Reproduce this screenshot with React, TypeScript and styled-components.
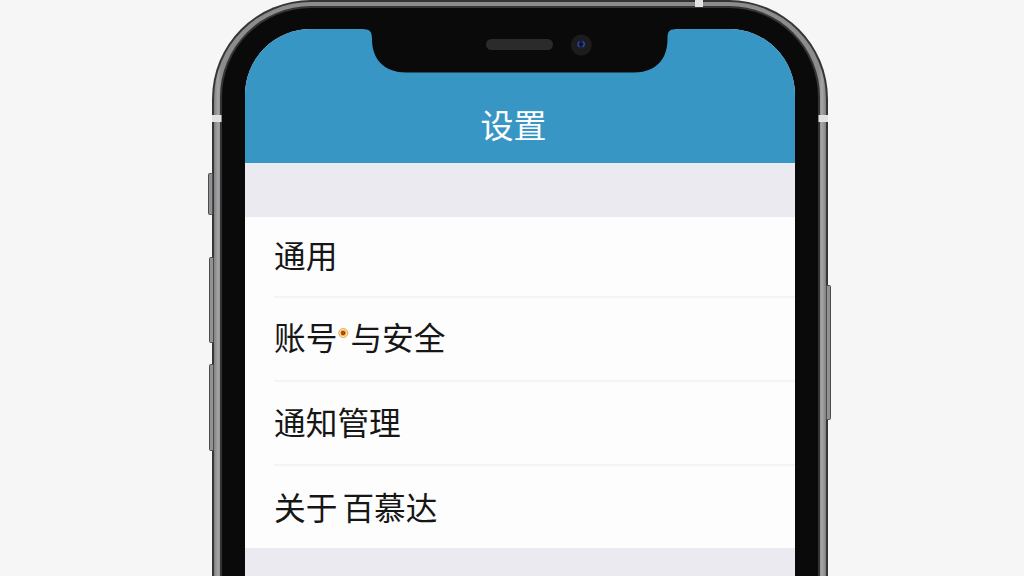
import React from 'react'
import styled, { createGlobalStyle } from 'styled-components'

const GlobalStyle = createGlobalStyle`
  * { box-sizing: border-box; }
  body {
    margin: 0;
    background: #f6f6f6;
    font-family: "Noto Sans CJK SC", "Noto Sans", sans-serif;
  }
`

const Stage = styled.div`
  position: relative;
  display: flex;
  align-items: flex-start;
  justify-content: center;
  width: 1024px;
  height: 576px;
  padding-left: 16px;
  overflow: hidden;
  background: #f6f6f6;
`

const Phone = styled.div`
  flex: none;
  width: 616px;
  height: 700px;
  padding: 2px 2px 0;
  border-radius: 99px 99px 0 0;
  background: #353537;
`

const Rim = styled.div`
  height: 100%;
  padding: 4px 6px 0;
  border-radius: 97px 97px 0 0;
  background: linear-gradient(90deg, #808082 0, #a6a6a6 4px, #8c8c8e 7px, #8c8c8e 605px, #a6a6a6 608px, #808082 612px);
`

const Bezel = styled.div`
  height: 100%;
  padding: 21px 23px 0;
  border: solid #353536;
  border-width: 2px 2px 0;
  border-radius: 91px 91px 0 0;
  background: #0a0a0a;
`

const Screen = styled.main`
  display: flex;
  flex-direction: column;
  gap: 54px;
  height: 100%;
  overflow: hidden;
  border-radius: 66px 66px 0 0;
  background: #ebeaf0;
`

const Hardware = styled.svg`
  position: absolute;
  inset: 0;
  pointer-events: none;
`

const Header = styled.header`
  display: flex;
  flex: none;
  align-items: flex-end;
  justify-content: center;
  height: 134px;
  padding: 0 13px 15px 0;
  background: #3896c4;
`

const Title = styled.h1`
  margin: 0;
  color: #fff;
  font-size: 33px;
  font-weight: 400;
  line-height: 48px;
`

const List = styled.ul`
  margin: 0;
  padding: 0 0 0 29px;
  list-style: none;
  background: #fdfdfd;
`

const Row = styled.li<{ $height: number; $lift?: number }>`
  display: flex;
  align-items: center;
  height: ${({ $height }) => $height}px;
  padding-bottom: ${({ $lift = 5 }) => $lift}px;
  border-bottom: 2px solid #f4f4f4;
  color: #161616;
  font-size: 31.7px;
  line-height: 46px;
  white-space: pre;

  &:last-child {
    border-bottom: 0;
  }
`

const Gap = styled.span`
  width: 5px;
`

const Badge = styled.svg`
  flex: none;
  margin: 0 1px 6px 0;
`

const BUTTONS = [
  { x: 208, y: 173, height: 42 },
  { x: 209, y: 257, height: 86 },
  { x: 209, y: 364, height: 87 },
  { x: 826, y: 285, height: 135 },
]

const PhoneHardware = () => (
  <Hardware width="1024" height="576" viewBox="0 0 1024 576">
    {BUTTONS.map(({ x, y, height }) => (
      <rect key={y} x={x + 0.5} y={y + 0.5} width="4" height={height - 1} rx="1" fill="#929294" stroke="#4c4c4e" />
    ))}

    {/* antenna bands */}
    <g fill="#e2e2e3">
      <rect x="212" y="115" width="9.5" height="7" />
      <rect x="818.5" y="115" width="9.5" height="7" />
      <rect x="695" y="0" width="8" height="7" />
    </g>

    {/* notch, speaker and camera */}
    <path d="M364 26V29.3C370 29.3 372 32 372 39C372 59 384 72.5 406 72.5H634C656 72.5 667.5 59 667.5 39C667.5 32 669 29.3 675 29.3V26Z" fill="#0a0a0a" />
    <rect x="486" y="39" width="67" height="11" rx="5.5" fill="#2b2b2c" />
    <circle cx="581.3" cy="45" r="10.5" fill="#1c1c1d" />
    <circle cx="581.3" cy="44.3" r="4.6" fill="#17203f" />
    <path d="M579.3 41.8Q576.5 44 579.5 47M583 41.5Q586 44.5 582.5 47" fill="none" stroke="#344c98" strokeWidth="1.3" />
    <circle cx="580.7" cy="44.3" r="1.5" fill="#0b1029" />
  </Hardware>
)

const HotDot = () => (
  <Badge width="12" height="12" viewBox="0 0 12 12">
    <circle cx="6.3" cy="6" r="4.5" fill="#fdebc0" stroke="#dda653" />
    <circle cx="6.3" cy="6" r="3" fill="#f0a32c" />
    <path d="M4.4 4.3H7L8.4 6L7 7.7H4.4Z" fill="#8c2414" />
    <path d="M6.1 5.2V6.7" stroke="#f4b13f" strokeWidth="0.8" />
  </Badge>
)

const App = () => (
  <>
    <GlobalStyle />
    <Stage>
      <Phone>
        <Rim>
          <Bezel>
            <Screen>
              <Header>
                <Title>设置</Title>
              </Header>
              <List>
                <Row $height={81}>通用</Row>
                <Row $height={84} $lift={7}>
                  账号
                  <HotDot />
                  与安全
                </Row>
                <Row $height={84}>通知管理</Row>
                <Row $height={82} $lift={3}>
                  关于
                  <Gap />
                  百慕达
                </Row>
              </List>
            </Screen>
          </Bezel>
        </Rim>
      </Phone>
      <PhoneHardware />
    </Stage>
  </>
)

export default App
